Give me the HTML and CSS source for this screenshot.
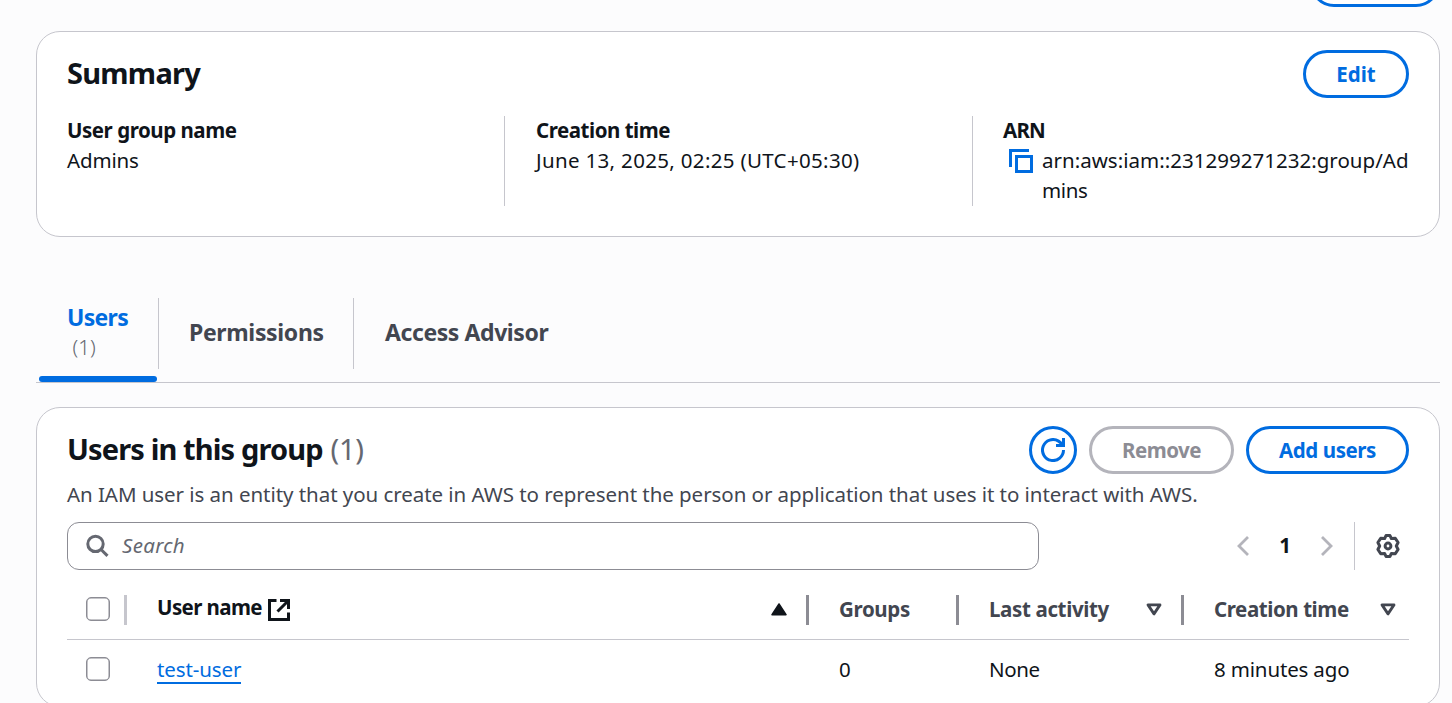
FILE: index.html
```html
<!DOCTYPE html>
<html lang="en">
<head>
<meta charset="utf-8">
<title>Admins - User group</title>
<link rel="stylesheet" href="styles.css">
</head>
<body>
<div class="page">
  <div class="page-action"></div>
  <section class="card summary">
    <header class="card-head">
      <h2 class="title"><span class="t-summary">Summary</span></h2>
      <button class="btn btn-edit"><span>Edit</span></button>
    </header>
    <div class="facts">
      <div class="fact"><div class="label"><span class="t-ugn">User group name</span></div><div class="value"><span class="t-admins">Admins</span></div></div>
      <div class="fact"><div class="label"><span class="t-ct">Creation time</span></div><div class="value"><span class="t-date">June 13, 2025, 02:25 (UTC+05:30)</span></div></div>
      <div class="fact"><div class="label"><span class="t-arnl">ARN</span></div>
        <div class="arn">
          <svg class="icon" viewBox="0 0 24 24"><path d="M1.5 18V1.5H20M7.5 7.5h15v15h-15z"/></svg>
          <div class="value"><span class="t-arn">arn:aws:iam::231299271232:group/Ad</span><br><span class="t-mins">mins</span></div>
        </div>
      </div>
    </div>
  </section>

  <nav class="tabs">
    <a class="tab active"><span class="t-users">Users</span><span class="count">(1)</span></a>
    <a class="tab tab-perm"><span class="t-perm">Permissions</span></a>
    <a class="tab tab-adv"><span class="t-adv">Access Advisor</span></a>
  </nav>

  <section class="card users">
    <header class="card-head">
      <h2 class="title"><span class="t-uig">Users in this group</span><span class="counter">(1)</span></h2>
      <div class="actions">
        <button class="btn btn-round"><svg class="icon" viewBox="0 0 24 24"><path d="M22.5 12A10.5 10.5 0 1 1 17.5 3.1Q20 4.6 21.5 7M22.5 0V7.5H15"/></svg></button>
        <button class="btn btn-remove"><span>Remove</span></button>
        <button class="btn btn-add"><span>Add users</span></button>
      </div>
    </header>
    <p class="desc"><span class="t-desc">An IAM user is an entity that you create in AWS to represent the person or application that uses it to interact with AWS.</span></p>
    <div class="tools">
      <div class="search">
        <svg class="icon" viewBox="0 0 24 24"><circle cx="9.5" cy="9.9" r="7.7"/><path d="M14.8 15.2l6.7 6.7"/></svg>
        <span class="t-search">Search</span>
      </div>
      <div class="pager">
        <svg class="chev" viewBox="0 0 12 20"><path d="M11 1L2 10l9 9"/></svg>
        <span class="page-no">1</span>
        <svg class="chev" viewBox="0 0 12 20"><path d="M1 1l9 9-9 9"/></svg>
        <div class="gear"><svg class="icon" viewBox="0 0 24 24"><path d="M10 1.6h4l1.4 3 3.9-.3 2.8 4.2-1.8 3.5 1.8 3.5-2.8 4.2-3.9-.3-1.4 3h-4l-1.4-3-3.9.3-2.8-4.2 1.8-3.5-1.8-3.5 2.8-4.2 3.9.3z"/><circle cx="12" cy="12" r="2.9"/></svg></div>
      </div>
    </div>
    <div class="grid head">
      <div class="cell c-check"><i class="box"></i></div>
      <div class="cell c-name"><span class="t-un">User name</span><svg class="icon ext" viewBox="0 0 24 24"><path d="M9.5 2.5H2.5v19h19v-7M13 2.5h8.5V11M21 3L10.5 13.5"/></svg><svg class="sort" viewBox="0 0 16 13"><path class="solid" d="M8 1L15 11.7H1z"/></svg></div>
      <div class="cell"><span class="t-groups">Groups</span></div>
      <div class="cell"><span class="t-last">Last activity</span><svg class="sort" viewBox="0 0 16 13"><path d="M2 1.9h12L8 10.9z"/></svg></div>
      <div class="cell"><span class="t-ct2">Creation time</span><svg class="sort" viewBox="0 0 16 13"><path d="M2 1.9h12L8 10.9z"/></svg></div>
    </div>
    <div class="grid row">
      <div class="cell c-check"><i class="box"></i></div>
      <div class="cell"><a class="link t-link">test-user</a></div>
      <div class="cell"><span>0</span></div>
      <div class="cell"><span class="t-none">None</span></div>
      <div class="cell"><span class="t-ago">8 minutes ago</span></div>
    </div>
  </section>
</div>
</body>
</html>
```
FILE: styles.css
```css
* { box-sizing: border-box; }
body { margin: 0; background: #fcfcfd; color: #0f141a; font: 20.5px/30px "Noto Sans", sans-serif; }
.page { height: 703px; overflow: hidden; padding: 0 12px 0 36px; display: flex; flex-direction: column; }
.page-action { flex: none; align-self: flex-end; width: 130px; height: 48px; margin: -41px 0 24px; border: 3px solid #006ce0; border-radius: 24px; background: #fff; }
.card { flex: none; background: #fff; border: 1px solid #c6c6cd; border-radius: 24px; padding: 18px 30px 0; }
.summary { height: 206px; }
.card-head { display: flex; justify-content: space-between; align-items: center; height: 48px; }
.title { margin: 0; padding-bottom: 2px; font-size: 29px; line-height: 36px; font-weight: 700; display: flex; }
.btn { height: 48px; border: 3px solid #006ce0; border-radius: 24px; background: #fff; color: #006ce0; font: 700 20.5px/30px "Noto Sans", sans-serif; padding: 0; display: flex; align-items: center; justify-content: center; }
.btn span { padding-bottom: 1px; }
.btn-edit { width: 106px; }
.btn-round { width: 48px; }
.btn-remove { width: 145px; border-color: #b4b4bb; color: #8c8c94; letter-spacing: -.5px; }
.btn-add { width: 163px; letter-spacing: -.42px; }
.actions { display: flex; gap: 12px; }
.icon { flex: none; width: 24px; height: 24px; fill: none; stroke: currentColor; stroke-width: 3; }
.facts { display: grid; grid-template-columns: 437px 468px 1fr; margin-top: 18px; height: 90px; white-space: nowrap; }
.fact + .fact { border-left: 1px solid #c6c6cd; padding-left: 31px; }
.fact:last-child { padding-left: 30px; }
.label { font-weight: 700; margin-top: -1px; }
.arn { display: flex; gap: 9px; padding-left: 6px; }
.arn .icon { color: #006ce0; margin-top: 4px; }
.tabs { flex: none; height: 86px; margin-top: 60px; border-bottom: 1px solid #c6c6cd; display: flex; color: #424650; font-size: 23px; font-weight: 700; white-space: nowrap; }
.tab { height: 71px; margin-top: 1px; padding: 0 0 4px 30px; display: flex; flex-direction: column; justify-content: center; position: relative; }
.tab.active { width: 123px; color: #006ce0; border-right: 1px solid #c6c6cd; padding-left: 31px; }
.tab.active::after { content: ""; position: absolute; left: 3px; right: 1px; bottom: -13px; height: 6px; border-radius: 3px; background: #006ce0; }
.tab-perm { width: 195px; border-right: 1px solid #c6c6cd; }
.tab-adv { padding-left: 31px; }
.count { font-size: 20.5px; font-weight: 300; color: #656871; padding-left: 5.5px; }
.users { height: 300px; margin-top: 24px; }
.counter { font-weight: 400; color: #656871; margin-left: 8px; letter-spacing: -.3px; }
.desc { margin: 5px 0 0; color: #424650; white-space: nowrap; }
.tools { display: flex; justify-content: space-between; margin-top: 13px; height: 48px; }
.search { width: 972px; border: 1px solid #8c8c94; border-radius: 12px; display: flex; align-items: center; padding-left: 18px; gap: 12px; color: #656871; font-style: italic; }
.search span, .page-no { padding-bottom: 2px; }
.pager { display: flex; align-items: center; color: #b4b4bb; }
.chev { width: 12px; height: 20px; fill: none; stroke: currentColor; stroke-width: 2.8; }
.page-no { width: 72px; text-align: center; color: #0f141a; font-weight: 700; }
.gear { height: 48px; width: 55px; margin-left: 21px; border-left: 1px solid #c6c6cd; color: #424650; display: flex; align-items: center; padding-left: 21px; }
.gear .icon { stroke-linejoin: round; stroke-width: 3; }
.grid { display: grid; grid-template-columns: 60px 682px 150px 225px 225px; white-space: nowrap; }
.cell { display: flex; align-items: center; padding-left: 30px; position: relative; }
.head { height: 70px; padding: 10px 0; border-bottom: 1px solid #c6c6cd; color: #424650; font-weight: 700; }
.head .cell { height: 59px; }
.cell span { padding-bottom: 2px; }
.head .cell:not(:last-child)::after { content: ""; position: absolute; right: 0; top: 15px; width: 3px; height: 30px; background: #8c8c94; }
.head .c-check::after { background: #c6c6cd !important; }
.cell.c-check { padding: 0 0 2px 19px; }
.box { width: 24px; height: 24px; border: 1px solid #8c8c94; border-radius: 5px; background: #fff; box-shadow: inset 0 0 0 .5px #8c8c94; }
.c-name { color: #0f141a; }
.cell.c-name span { padding-bottom: 5px; }
.ext { margin-left: 5px; }
.sort { width: 16px; height: 13px; margin-left: auto; margin-right: 22px; fill: none; stroke: currentColor; stroke-width: 2.8; stroke-linejoin: round; }
.head .cell:last-child .sort { margin-right: 13px; }
.sort .solid { fill: currentColor; stroke-width: 1.5; }
.row { height: 60px; }
.row .cell { height: 60px; }
.link { color: #006ce0; line-height: 26px; border-bottom: 2px solid #006ce0; }

/* Tracking per label */
.t-summary { letter-spacing: -.75px; }
.t-ugn, .t-ct { letter-spacing: -.47px; }
.t-arnl { letter-spacing: -.8px; }
.t-admins { letter-spacing: -.15px; }
.t-date { letter-spacing: .33px; }
.t-arn { letter-spacing: .02px; }
.t-mins { letter-spacing: -.4px; }
.t-users { letter-spacing: -.7px; }
.t-perm { letter-spacing: -.34px; }
.t-adv { letter-spacing: -.42px; }
.t-uig { letter-spacing: -.87px; }
.t-desc { letter-spacing: -.05px; }
.t-search { letter-spacing: .3px; }
.t-un { letter-spacing: -.6px; }
.t-groups, .t-last { letter-spacing: -.36px; }
.t-ct2 { letter-spacing: -.42px; }
.t-link { letter-spacing: -.1px; }
.t-none { letter-spacing: -.4px; }
.t-ago { letter-spacing: -.16px; }
```
